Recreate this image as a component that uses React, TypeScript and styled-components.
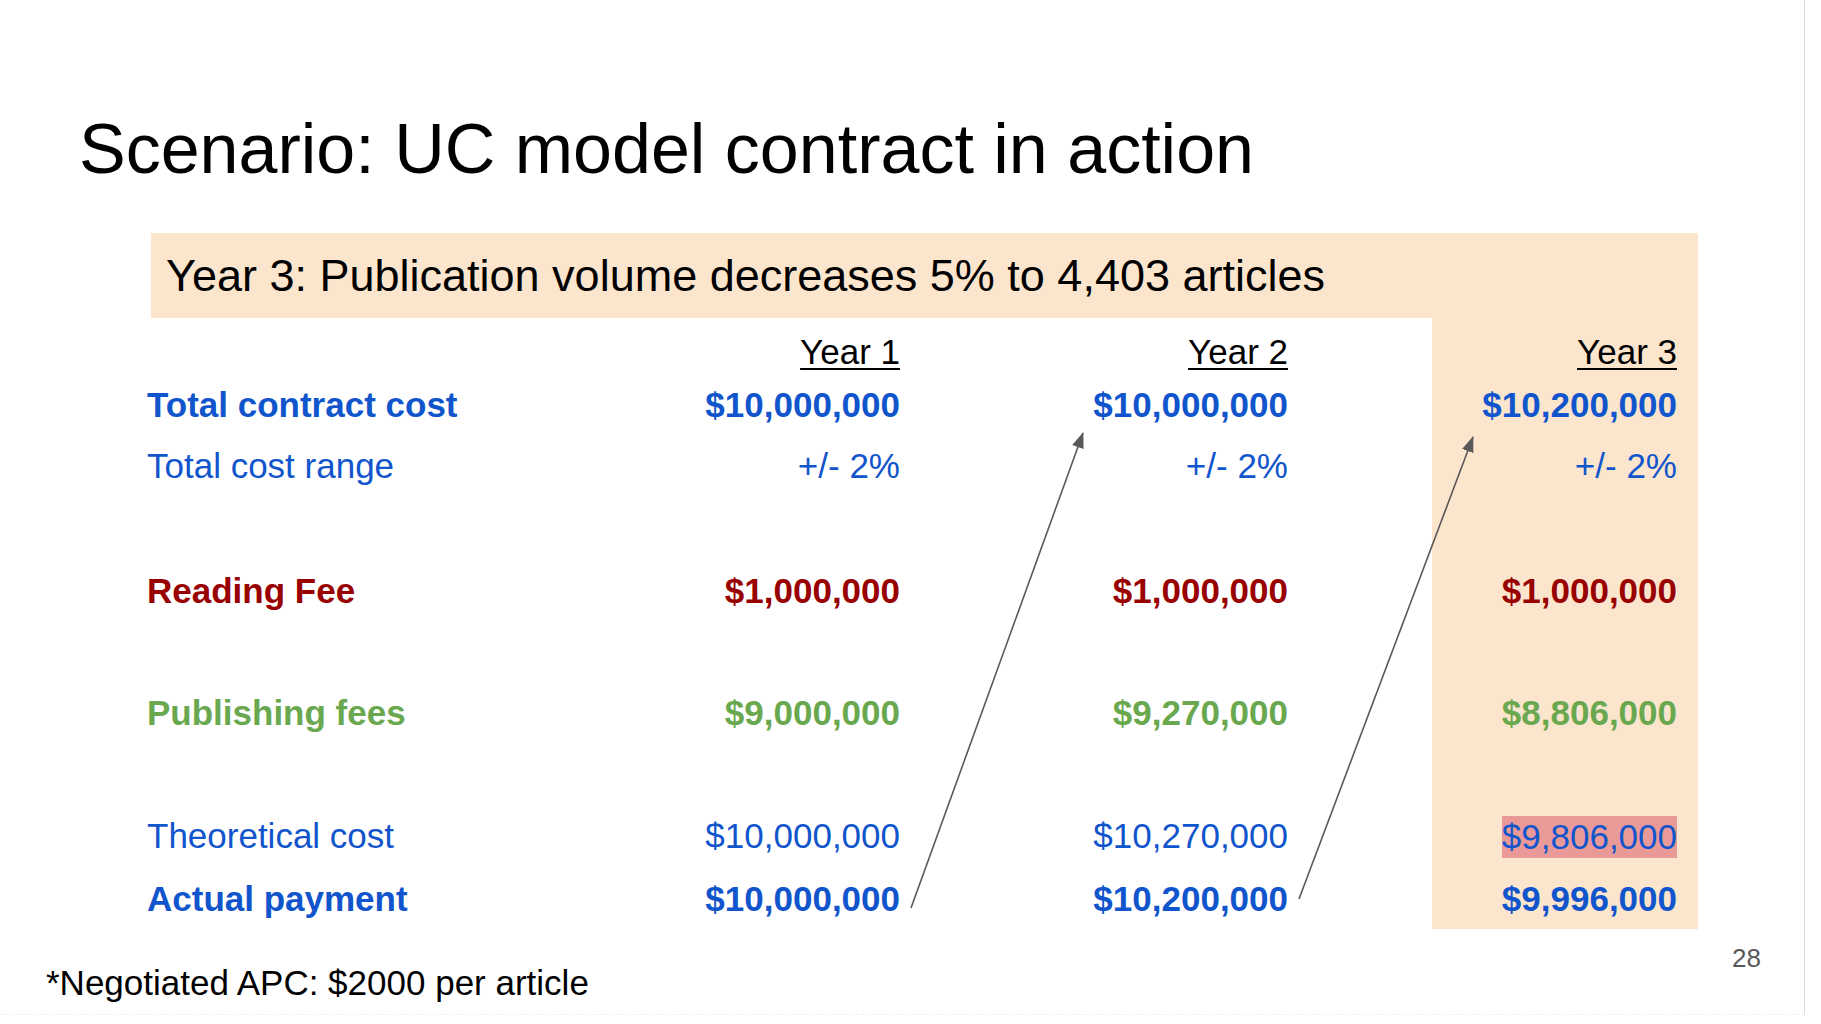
import React from "react";
import styled, { createGlobalStyle } from "styled-components";

const Global = createGlobalStyle`
  html, body { margin: 0; padding: 0; background: #ffffff; }
  body { font-family: "Liberation Sans", Arial, sans-serif; }
`;

const PEACH = "#fce5cd";
const BLUE = "#1155cc";
const RED = "#990000";
const GREEN = "#6aa84f";

const Slide = styled.div`
  position: relative;
  width: 1804px;
  height: 1014px;
  border-right: 1px solid #dadada;
  border-bottom: 1px dashed #f0f0f0;
  display: flex;
  flex-direction: column;
  background: #ffffff;
  overflow: hidden;
`;

const Title = styled.h1`
  margin: 107px 0 0 79px;
  font-size: 70px;
  line-height: 84px;
  font-weight: 400;
  color: #000000;
  white-space: nowrap;
`;

const TableBlock = styled.div`
  margin: 42px 0 0 147px;
  width: 1551px;
  display: flex;
  flex-direction: column;
`;

const Banner = styled.div`
  margin-left: 4px;
  height: 85px;
  background: ${PEACH};
  padding-left: 15px;
  font-size: 45px;
  line-height: 85px;
  color: #000000;
  white-space: nowrap;
`;

const Row = styled.div<{ $h: number }>`
  display: grid;
  grid-template-columns: 440px 313px 532px 266px;
  height: ${(p) => p.$h}px;
  box-sizing: border-box;
`;

type Tone = "blue" | "red" | "green" | "black";
const toneColor = (t: Tone) =>
  t === "blue" ? BLUE : t === "red" ? RED : t === "green" ? GREEN : "#000000";

const Cell = styled.div<{ $tone: Tone; $bold?: boolean; $pt?: number }>`
  font-size: 35px;
  line-height: 40px;
  padding-top: ${(p) => p.$pt ?? 0}px;
  color: ${(p) => toneColor(p.$tone)};
  font-weight: ${(p) => (p.$bold ? 700 : 400)};
  white-space: nowrap;
`;

const Label = styled(Cell)`
  text-align: left;
`;

const Value = styled(Cell)`
  text-align: right;
`;

const MidValue = styled(Value)`
  padding-right: 144px;
`;

const Y3Value = styled(Value)`
  background: ${PEACH};
  padding-right: 21px;
`;

const Header = styled.span`
  text-decoration: underline;
  text-decoration-thickness: 2px;
  text-underline-offset: 4px;
`;

const Highlight = styled.span`
  background: #ea9999;
  display: inline-block;
  height: 42px;
  line-height: 42px;
  vertical-align: baseline;
`;

const Footer = styled.div`
  display: flex;
  justify-content: space-between;
  align-items: flex-start;
  padding: 0 43px 0 46px;
`;

const Footnote = styled.div`
  margin-top: 34px;
  font-size: 35px;
  line-height: 40px;
  color: #000000;
`;

const PageNum = styled.div`
  margin-top: 14px;
  font-size: 26px;
  line-height: 30px;
  color: #595959;
`;

const Arrows = styled.svg`
  position: absolute;
  left: 0;
  top: 0;
  width: 1804px;
  height: 1014px;
  pointer-events: none;
`;

type RowData = {
  h: number;
  label: string;
  tone: Tone;
  bold?: boolean;
  v: [string, string, string];
  hl?: boolean;
};

const rows: RowData[] = [
  { h: 61, label: "Total contract cost", tone: "blue", bold: true, v: ["$10,000,000", "$10,000,000", "$10,200,000"] },
  { h: 125, label: "Total cost range", tone: "blue", v: ["+/- 2%", "+/- 2%", "+/- 2%"] },
  { h: 122, label: "Reading Fee", tone: "red", bold: true, v: ["$1,000,000", "$1,000,000", "$1,000,000"] },
  { h: 123, label: "Publishing fees", tone: "green", bold: true, v: ["$9,000,000", "$9,270,000", "$8,806,000"] },
  { h: 63, label: "Theoretical cost", tone: "blue", v: ["$10,000,000", "$10,270,000", "$9,806,000"], hl: true },
  { h: 50, label: "Actual payment", tone: "blue", bold: true, v: ["$10,000,000", "$10,200,000", "$9,996,000"] },
];

export default function App() {
  return (
    <>
      <Global />
      <Slide>
        <Title>Scenario: UC model contract in action</Title>
        <TableBlock>
          <Banner>Year 3: Publication volume decreases 5% to 4,403 articles</Banner>
          <Row $h={67}>
            <Label $tone="black" $pt={14} />
            <Value $tone="black" $pt={14}>
              <Header>Year 1</Header>
            </Value>
            <MidValue $tone="black" $pt={14}>
              <Header>Year 2</Header>
            </MidValue>
            <Y3Value $tone="black" $pt={14}>
              <Header>Year 3</Header>
            </Y3Value>
          </Row>
          {rows.map((r) => (
            <Row key={r.label} $h={r.h}>
              <Label $tone={r.tone} $bold={r.bold}>{r.label}</Label>
              <Value $tone={r.tone} $bold={r.bold}>{r.v[0]}</Value>
              <MidValue $tone={r.tone} $bold={r.bold}>{r.v[1]}</MidValue>
              <Y3Value $tone={r.tone} $bold={r.bold}>
                {r.hl ? <Highlight>{r.v[2]}</Highlight> : r.v[2]}
              </Y3Value>
            </Row>
          ))}
        </TableBlock>
        <Footer>
          <Footnote>*Negotiated APC: $2000 per article</Footnote>
          <PageNum>28</PageNum>
        </Footer>
        <Arrows viewBox="0 0 1804 1014">
          <defs>
            <marker
              id="head"
              viewBox="0 0 16 12"
              refX="15"
              refY="6"
              markerWidth="16"
              markerHeight="12"
              markerUnits="userSpaceOnUse"
              orient="auto"
            >
              <path d="M0,0 L16,6 L0,12 z" fill="#595959" />
            </marker>
          </defs>
          <line x1="911" y1="908" x2="1083" y2="433" stroke="#595959" strokeWidth="1.6" markerEnd="url(#head)" />
          <line x1="1299" y1="899" x2="1473" y2="437" stroke="#595959" strokeWidth="1.6" markerEnd="url(#head)" />
        </Arrows>
      </Slide>
    </>
  );
}
